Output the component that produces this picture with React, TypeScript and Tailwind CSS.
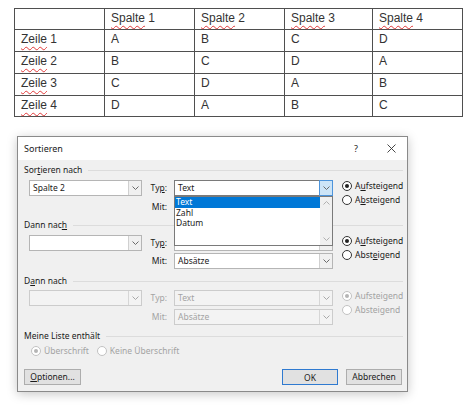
import React from 'react';

const cols = ['Spalte 1', 'Spalte 2', 'Spalte 3', 'Spalte 4'];
const rows: [string, string[]][] = [
  ['Zeile 1', ['A', 'B', 'C', 'D']],
  ['Zeile 2', ['B', 'C', 'D', 'A']],
  ['Zeile 3', ['C', 'D', 'A', 'B']],
  ['Zeile 4', ['D', 'A', 'B', 'C']],
];
const widths = [90, 90, 90, 88, 90];
const heights = [21, 22, 22, 22, 21];

// Wort mit roter Rechtschreib-Wellenlinie
function Spell({ text }: { text: string }) {
  const [word, ...rest] = text.split(' ');
  return (
    <>
      <span className="underline decoration-wavy decoration-[#e23a3a] decoration-1 underline-offset-[3px]">{word}</span>
      {rest.length > 0 && ' ' + rest.join(' ')}
    </>
  );
}

function Chevron({ up = false, color = '#606060' }: { up?: boolean; color?: string }) {
  return (
    <svg width="7" height="4" viewBox="0 0 7 4" className={up ? 'rotate-180' : ''}>
      <path d="M0.5 0.5 L3.5 3.5 L6.5 0.5" fill="none" stroke={color} strokeWidth="1" />
    </svg>
  );
}

function Combo({
  width,
  value,
  disabled = false,
  open = false,
  children,
}: {
  width: number;
  value?: string;
  disabled?: boolean;
  open?: boolean;
  children?: React.ReactNode;
}) {
  return (
    <div className="relative" style={{ width }}>
      <div
        className={`flex h-[16px] border ${disabled ? 'border-[#cccccc] bg-[#f3f3f3]' : open ? 'border-[#7a7a7a] bg-white' : 'border-[#b5b5b5] bg-white'}`}
      >
        <div className={`flex-1 pl-[3px] leading-[14px] ${disabled ? 'text-[#a3a3a3]' : 'text-[#1a1a1a]'}`}>{value}</div>
        <div
          className={`flex w-[13px] items-center justify-center border-l ${
            open ? 'border border-[#4d94db] bg-[#cce4f7] -m-px h-[16px] w-[14px]' : disabled ? 'border-[#d6d6d6] bg-[#f3f3f3]' : 'border-[#d0d0d0] bg-[#f0f0f0]'
          }`}
        >
          <Chevron color={disabled ? '#a8a8a8' : '#6a6a6a'} />
        </div>
      </div>
      {children}
    </div>
  );
}

function Radio({
  label,
  mn,
  checked = false,
  disabled = false,
}: {
  label: string;
  mn?: number;
  checked?: boolean;
  disabled?: boolean;
}) {
  const parts =
    mn === undefined ? [label] : [label.slice(0, mn), label.slice(mn, mn + 1), label.slice(mn + 1)];
  return (
    <div className="flex h-[12px] items-center">
      <div
        className={`flex h-[10px] w-[10px] items-center justify-center rounded-full border bg-white ${
          disabled ? 'border-[#c2c2c2] bg-[#f3f3f3]' : 'border-[#333333]'
        }`}
      >
        {checked && <div className={`h-[4px] w-[4px] rounded-full ${disabled ? 'bg-[#b5b5b5]' : 'bg-[#222222]'}`} />}
      </div>
      <div className={`ml-[3px] ${disabled ? 'text-[#a3a3a3]' : 'text-[#1a1a1a]'}`}>
        {parts.length === 1 ? parts[0] : (
          <>
            {parts[0]}
            <span className="underline underline-offset-1">{parts[1]}</span>
            {parts[2]}
          </>
        )}
      </div>
    </div>
  );
}

function Mn({ text, at }: { text: string; at: number }) {
  return (
    <>
      {text.slice(0, at)}
      <span className="underline underline-offset-1">{text.slice(at, at + 1)}</span>
      {text.slice(at + 1)}
    </>
  );
}

function SectionHead({ children }: { children: React.ReactNode }) {
  return (
    <div className="flex h-[12px] items-center pl-[6px] pr-[4px] text-[#1a1a1a]">
      <div className="leading-[12px]">{children}</div>
      <div className="ml-[6px] h-px flex-1 bg-[#dcdcdc]" />
    </div>
  );
}

function Label({ children, disabled = false }: { children: React.ReactNode; disabled?: boolean }) {
  return (
    <div className={`w-[32px] pr-[7px] text-right ${disabled ? 'text-[#a3a3a3]' : 'text-[#1a1a1a]'}`}>{children}</div>
  );
}

function DropList() {
  return (
    <div className="absolute left-0 top-[16px] z-10 flex h-[50px] w-[159px] border border-[#7a7a7a] bg-white">
      <div className="flex-1 leading-[10.5px]">
        <div className="bg-[#0078d7] pl-[1px] text-white">Text</div>
        <div className="pl-[1px] text-[#1a1a1a]">Zahl</div>
        <div className="pl-[1px] text-[#1a1a1a]">Datum</div>
      </div>
      <div className="flex w-[12px] flex-col items-center justify-between bg-[#f0f0f0] py-[4px]">
        <Chevron up color="#b0b0b0" />
        <Chevron color="#b0b0b0" />
      </div>
    </div>
  );
}

export default function App() {
  return (
    <div className="h-[408px] w-[474px] overflow-hidden bg-white">
      <div className="ml-[14px] pt-[8px]">
        <table
          className="border-collapse text-[12px] text-[#333333]"
          style={{ fontFamily: '"Liberation Sans", Arial, sans-serif' }}
        >
          <tbody>
            {[['', cols] as [string, string[]], ...rows].map(([head, cells], ri) => (
              <tr key={ri} style={{ height: heights[ri] }}>
                {[head, ...cells].map((c, ci) => (
                  <td
                    key={ci}
                    className="border border-[#4f4f4f] p-0 pb-[3px] pl-[6px] align-middle leading-[14px]"
                    style={{ width: widths[ci], minWidth: widths[ci] }}
                  >
                    {c && (ri === 0 || ci === 0) ? <Spell text={c} /> : c}
                  </td>
                ))}
              </tr>
            ))}
          </tbody>
        </table>
      </div>

      <div
        className="ml-[17px] mt-[19px] flex h-[256px] w-[391px] flex-col border border-[#8a8a8a] bg-[#f0f0f0] text-[8.5px] shadow-[0_2px_10px_rgba(0,0,0,0.22)]"
        style={{ fontFamily: '"Noto Sans", "Open Sans", sans-serif' }}
      >
        {/* Titelleiste */}
        <div className="flex h-[23px] shrink-0 items-center bg-white pl-[6px] text-[9px] text-[#1a1a1a]">
          <div className="flex-1">Sortieren</div>
          <div className="w-[12px] text-center text-[9px]">?</div>
          <div className="ml-[23px] mr-[10px] flex w-[12px] justify-center">
            <svg width="9" height="9" viewBox="0 0 9 9">
              <path d="M0.5 0.5 L8.5 8.5 M8.5 0.5 L0.5 8.5" stroke="#333" strokeWidth="0.9" />
            </svg>
          </div>
        </div>

        <div className="pt-[4px]">
          <SectionHead>
            <Mn text="Sortieren nach" at={3} />
          </SectionHead>
          <div className="mt-[4px] flex pl-[11px]">
            <div className="flex flex-col gap-[3px]">
              <div className="flex items-center">
                <Combo width={113} value="Spalte 2" />
                <Label>
                  <Mn text="Typ:" at={2} />
                </Label>
                <Combo width={159} value="Text" open>
                  <DropList />
                </Combo>
              </div>
              <div className="flex items-center">
                <div className="w-[113px]" />
                <Label>Mit:</Label>
                <Combo width={159} value="" />
              </div>
            </div>
            <div className="ml-[9px] flex flex-col gap-[2px]">
              <Radio label="Aufsteigend" mn={1} checked />
              <Radio label="Absteigend" mn={1} />
            </div>
          </div>

          <div className="mt-[4px]">
            <SectionHead>
              <Mn text="Dann nach" at={8} />
            </SectionHead>
          </div>
          <div className="mt-[4px] flex pl-[11px]">
            <div className="flex flex-col gap-[2px]">
              <div className="flex items-center">
                <Combo width={113} value="" />
                <Label>
                  <Mn text="Typ:" at={2} />
                </Label>
                <Combo width={159} value="" />
              </div>
              <div className="flex items-center">
                <div className="w-[113px]" />
                <Label>Mit:</Label>
                <Combo width={159} value="Absätze" />
              </div>
            </div>
            <div className="ml-[9px] flex flex-col gap-[2px]">
              <Radio label="Aufsteigend" mn={1} checked />
              <Radio label="Absteigend" mn={4} />
            </div>
          </div>

          <div className="mt-[6px]">
            <SectionHead>
              <Mn text="Dann nach" at={1} />
            </SectionHead>
          </div>
          <div className="mt-[3px] flex pl-[11px]">
            <div className="flex flex-col gap-[3px]">
              <div className="flex items-center">
                <Combo width={113} value="" disabled />
                <Label disabled>Typ:</Label>
                <Combo width={159} value="Text" disabled />
              </div>
              <div className="flex items-center">
                <div className="w-[113px]" />
                <Label disabled>Mit:</Label>
                <Combo width={159} value="Absätze" disabled />
              </div>
            </div>
            <div className="ml-[9px] flex flex-col gap-[2px]">
              <Radio label="Aufsteigend" checked disabled />
              <Radio label="Absteigend" disabled />
            </div>
          </div>

          <div className="mt-[5px]">
            <SectionHead>Meine Liste enthält</SectionHead>
          </div>
          <div className="mt-[3px] flex gap-[8px] pl-[13px]">
            <Radio label="Überschrift" checked disabled />
            <Radio label="Keine Überschrift" disabled />
          </div>

          <div className="mt-[12px] flex items-center pl-[6px] pr-[5px]">
            <button className="h-[16px] w-[57px] border border-[#adadad] bg-[#e1e1e1] text-[8.5px] leading-[14px] text-[#1a1a1a]">
              <Mn text="Optionen..." at={0} />
            </button>
            <div className="flex-1" />
            <button className="h-[16px] w-[56px] border-[1.5px] border-[#2f7ad0] bg-[#e1e1e1] text-[8.5px] leading-[13px] text-[#1a1a1a]">
              OK
            </button>
            <button className="ml-[8px] h-[16px] w-[56px] border border-[#adadad] bg-[#e1e1e1] text-[8.5px] leading-[14px] text-[#1a1a1a]">
              Abbrechen
            </button>
          </div>
        </div>
      </div>
    </div>
  );
}
